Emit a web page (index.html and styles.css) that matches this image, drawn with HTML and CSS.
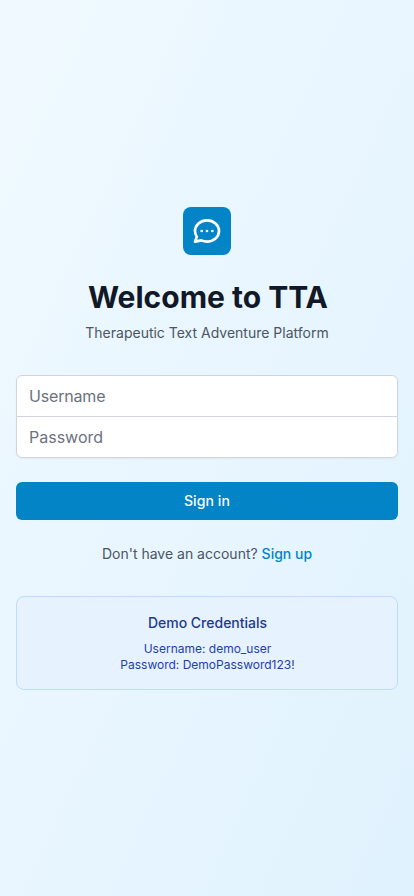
FILE: index.html
```html
<!DOCTYPE html>
<html lang="en">
<head>
<meta charset="utf-8">
<meta name="viewport" content="width=device-width, initial-scale=1">
<title>TTA</title>
<link rel="stylesheet" href="styles.css">
</head>
<body>
<main class="page">
  <div class="panel">
    <header class="intro">
      <div class="logo">
        <svg viewBox="0 0 24 24" fill="none" stroke="currentColor" stroke-width="2" stroke-linecap="round" stroke-linejoin="round"><path d="M8 12h.01M12 12h.01M16 12h.01M21 12c0 4.418-4.03 8-9 8a9.863 9.863 0 01-4.255-.949L3 20l1.395-3.72C3.512 15.042 3 13.574 3 12c0-4.418 4.03-8 9-8s9 3.582 9 8z"/></svg>
      </div>
      <h1 class="title">Welcome to TTA</h1>
      <p class="subtitle">Therapeutic Text Adventure Platform</p>
    </header>
    <form class="form">
      <div class="fields">
        <input class="field field-top" type="text" placeholder="Username" aria-label="Username">
        <input class="field field-bottom" type="password" placeholder="Password" aria-label="Password">
      </div>
      <button class="submit" type="button">Sign in</button>
      <p class="signup">Don't have an account? <a class="link" href="#">Sign up</a></p>
    </form>
    <section class="demo">
      <h2 class="demo-title">Demo Credentials</h2>
      <p class="demo-line">Username: demo_user</p>
      <p class="demo-line">Password: DemoPassword123!</p>
    </section>
  </div>
</main>
</body>
</html>
```
FILE: styles.css
```css
*, *::before, *::after { box-sizing: border-box; }
body, h1, h2, p { margin: 0; }
body { font-family: Inter, sans-serif; line-height: 1.5; }
.page {
  min-height: 100vh;
  display: flex;
  align-items: center;
  justify-content: center;
  padding: 48px 16px;
  background: linear-gradient(to bottom right, #f0f9ff, #e0f2fe);
}
.panel { width: 100%; max-width: 448px; display: flex; flex-direction: column; gap: 32px; }
.intro { text-align: center; }
.logo {
  width: 48px;
  height: 48px;
  margin: 0 auto;
  display: flex;
  align-items: center;
  justify-content: center;
  border-radius: 8px;
  background: #0284c7;
  color: #fff;
}
.logo svg { width: 32px; height: 32px; }
.title { margin-top: 24px; padding-left: 2px; font-size: 30px; line-height: 36px; font-weight: 700; color: #111827; }
.subtitle { margin-top: 8px; font-size: 14px; line-height: 20px; color: #4b5563; }
.form { display: flex; flex-direction: column; gap: 24px; }
.fields { border-radius: 6px; box-shadow: 0 1px 2px rgba(0, 0, 0, 0.05); display: flex; flex-direction: column; }
.field {
  width: 100%;
  height: 42px;
  margin: 0;
  padding: 8px 12px;
  border: 1px solid #d1d5db;
  background: #fff;
  color: #111827;
  font: 400 16px/24px Inter, sans-serif;
}
.field::placeholder { color: #6b7280; opacity: 1; }
.field-top { border-radius: 6px 6px 0 0; letter-spacing: -0.18px; }
.field-bottom { margin-top: -1px; border-radius: 0 0 6px 6px; }
.submit {
  height: 38px;
  padding: 8px 16px;
  border: 1px solid transparent;
  border-radius: 6px;
  background-color: #0284c7;
  color: #fff;
  font: 500 14px/20px Inter, sans-serif;
  letter-spacing: 0.1px;
}
.signup { text-align: center; font-size: 14px; line-height: 20px; color: #4b5563; }
.link { font-weight: 500; color: #0284c7; text-decoration: none; }
.demo {
  padding: 16px;
  border: 1px solid #bfdbfe;
  border-radius: 8px;
  background: #e6f2fe;
  text-align: center;
}
.demo-title { margin-bottom: 8px; padding-left: 1px; font-size: 14px; line-height: 20px; font-weight: 500; color: #1e3a8a; }
.demo-line { padding-left: 1px; font-size: 12px; line-height: 16px; color: #1e40af; }
```
